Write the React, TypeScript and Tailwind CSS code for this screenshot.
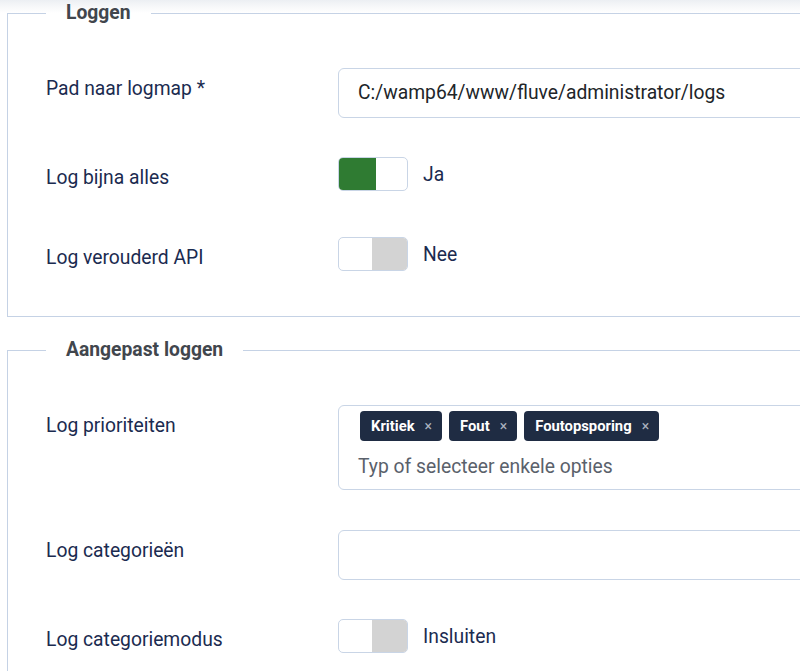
import React from "react";

const font = { fontFamily: "Roboto, 'Liberation Sans', sans-serif" };

function Row({ label, children, className = "" }: { label: string; children: React.ReactNode; className?: string }) {
  return (
    <div className={"flex items-start " + className}>
      <div className="w-[292px] shrink-0 pt-[7px] text-[19.3px] leading-[27px] text-[#1b2b50]">{label}</div>
      <div className="flex-1">{children}</div>
    </div>
  );
}

function Switch({ on, text }: { on: boolean; text: string }) {
  return (
    <div className="flex items-center">
      <div className="relative h-[34px] w-[70px] overflow-hidden rounded-[5px] border border-[#c9d5e6] bg-white">
        {on ? (
          <div className="absolute left-0 top-0 h-full w-[37px] bg-[#2f7b32]" />
        ) : (
          <div className="absolute right-0 top-0 h-full w-[35px] bg-[#d3d3d3]" />
        )}
      </div>
      <span className="ml-[15px] text-[19.3px] leading-[27px] text-[#1b2b50]">{text}</span>
    </div>
  );
}

function Tag({ text }: { text: string }) {
  return (
    <span className="flex h-[30px] items-center rounded-[4px] bg-[#1f2c43] pl-[11px] pr-[10px] text-[14.8px] font-bold text-white">
      {text}
      <span className="ml-[10px] text-[14px] font-normal text-[#aab2bf]">×</span>
    </span>
  );
}

export default function App() {
  return (
    <div
      className="relative h-[671px] w-[800px] overflow-hidden bg-[linear-gradient(to_bottom,#eceff3_0px,#f6f7f9_6px,#ffffff_13px)]"
      style={font}
    >
      <fieldset className="ml-[7px] w-[900px] border border-[#c5d2e5] pb-[45px] pl-[38px]">
        <legend className="px-[20px] text-[19.3px] font-bold leading-[26px] text-[#41464d]">Loggen</legend>
        <Row label="Pad naar logmap *" className="mt-[42px]">
          <div className="flex h-[50px] items-center rounded-[6px] border border-[#c9d5e6] px-[19px] text-[19.3px] text-[#212529]">
            C:/wamp64/www/fluve/administrator/logs
          </div>
        </Row>
        <Row label="Log bijna alles" className="mt-[39px]">
          <Switch on text="Ja" />
        </Row>
        <Row label="Log verouderd API" className="mt-[46px]">
          <Switch on={false} text="Nee" />
        </Row>
      </fieldset>

      <fieldset className="ml-[7px] mt-[20px] w-[900px] border border-[#c5d2e5] pb-[45px] pl-[38px]">
        <legend className="px-[20px] text-[19.3px] font-bold leading-[26px] text-[#41464d]">Aangepast loggen</legend>
        <Row label="Log prioriteiten" className="mt-[42px]">
          <div className="h-[85px] rounded-[6px] border border-[#c9d5e6] pl-[21px] pt-[5px]">
            <div className="flex gap-[7px]">
              <Tag text="Kritiek" />
              <Tag text="Fout" />
              <Tag text="Foutopsporing" />
            </div>
            <div className="-ml-[2px] mt-[12px] text-[19.3px] leading-[27px] text-[#5a616b]">Typ of selecteer enkele opties</div>
          </div>
        </Row>
        <Row label="Log categorieën" className="mt-[40px]">
          <div className="h-[50px] rounded-[6px] border border-[#c9d5e6]" />
        </Row>
        <Row label="Log categoriemodus" className="mt-[39px]">
          <Switch on={false} text="Insluiten" />
        </Row>
      </fieldset>
    </div>
  );
}
